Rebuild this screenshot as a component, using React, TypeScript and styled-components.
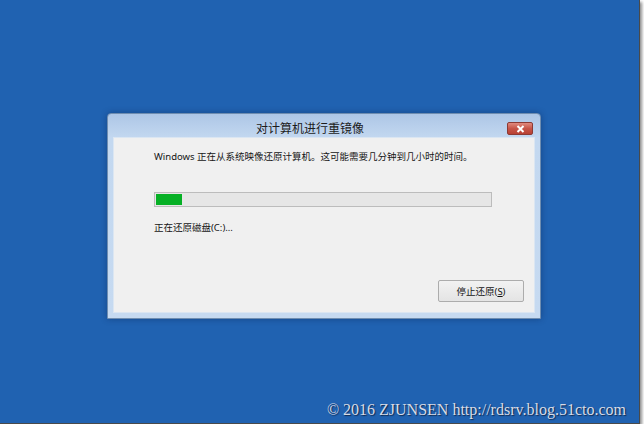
import React from "react";
import styled, { createGlobalStyle } from "styled-components";

const Global = createGlobalStyle`
  html, body { margin: 0; padding: 0; background: #ffffff; }
  body { font-family: "Noto Sans", "Noto Sans CJK SC", sans-serif; }
`;

const Screen = styled.div`
  box-sizing: border-box;
  width: 640px;
  height: 424px;
  background: #2062b1;
  border-right: 1px solid #4a4a4a;
  border-bottom: 1px solid #4a4a4a;
  box-shadow: 2px 2px 3px rgba(0, 0, 0, 0.45);
  display: flex;
  flex-direction: column;
  padding: 113px 0 0 107px;
`;

const Dialog = styled.div`
  box-sizing: border-box;
  width: 434px;
  height: 206px;
  border: 1px solid #6f8db0;
  border-radius: 4px 4px 0 0;
  background: linear-gradient(#adc6e6 0px, #c3d8f0 24px, #c6daf1 100%);
  box-shadow: 0 0 6px rgba(0, 20, 60, 0.35);
  display: flex;
  flex-direction: column;
  padding: 0 5px 5px 5px;
`;

const TitleBar = styled.div`
  height: 23px;
  display: flex;
  align-items: flex-start;
`;

const Title = styled.div`
  flex: 1;
  text-align: center;
  font-size: 12px;
  line-height: 14px;
  padding-top: 7px;
  color: #1c1c1c;
  font-family: "Noto Sans CJK SC", sans-serif;
`;

const CloseButton = styled.div`
  width: 26px;
  height: 13px;
  margin-top: 8px;
  margin-right: 2px;
  box-sizing: border-box;
  border: 1px solid #8c3a34;
  border-radius: 2px;
  background: linear-gradient(#e08a7e, #c75548 50%, #b84033);
  display: flex;
  align-items: center;
  justify-content: center;
`;

const Client = styled.div`
  flex: 1;
  background: #f0f0f0;
  border: 1px solid #dbe6f2;
  display: flex;
  flex-direction: column;
  padding: 10px 10px 10px 40px;
  font-family: "Noto Sans", "Noto Sans CJK SC", sans-serif;
  font-size: 9.5px;
  color: #151515;
`;

const Message = styled.div`
  line-height: 12px;
  height: 12px;
  margin-top: 3px;
`;

const Track = styled.div`
  box-sizing: border-box;
  width: 338px;
  height: 15px;
  margin-top: 29px;
  background: #e6e6e6;
  border: 1px solid #bcbcbc;
  padding: 1px;
  display: flex;
`;

const Fill = styled.div`
  height: 100%;
  background: #06b025;
`;

const Status = styled.div`
  line-height: 12px;
  margin-top: 15px;
`;

const Footer = styled.div`
  margin-top: auto;
  display: flex;
  justify-content: flex-end;
`;

const Button = styled.div`
  box-sizing: border-box;
  width: 86px;
  height: 22px;
  border: 1px solid #acacac;
  border-radius: 2px;
  background: linear-gradient(#f2f2f2, #e4e4e4);
  display: flex;
  align-items: center;
  justify-content: center;
  font-size: 9.5px;
  color: #151515;
  u { text-decoration: underline; }
`;

const Copyright = styled.div`
  margin-top: auto;
  align-self: flex-end;
  margin-right: 13px;
  margin-bottom: 4px;
  font-family: "Liberation Serif", serif;
  font-size: 16px;
  line-height: 18px;
  color: #d7dbe6;
  text-shadow: 1px 1px 1px rgba(10, 20, 40, 0.7);
`;

export default function App() {
  const progress = 7.7;
  return (
    <>
      <Global />
      <Screen>
        <Dialog>
          <TitleBar>
            <Title>对计算机进行重镜像</Title>
            <CloseButton>
              <svg width="9" height="8" viewBox="0 0 9 8">
                <path d="M1.5 1 L7.5 7 M7.5 1 L1.5 7" stroke="#ffffff" strokeWidth="2" />
              </svg>
            </CloseButton>
          </TitleBar>
          <Client>
            <Message>Windows 正在从系统映像还原计算机。这可能需要几分钟到几小时的时间。</Message>
            <Track>
              <Fill style={{ width: `${progress}%` }} />
            </Track>
            <Status>正在还原磁盘(C:)...</Status>
            <Footer>
              <Button>
                停止还原(<u>S</u>)
              </Button>
            </Footer>
          </Client>
        </Dialog>
        <Copyright>© 2016 ZJUNSEN http://rdsrv.blog.51cto.com</Copyright>
      </Screen>
    </>
  );
}
